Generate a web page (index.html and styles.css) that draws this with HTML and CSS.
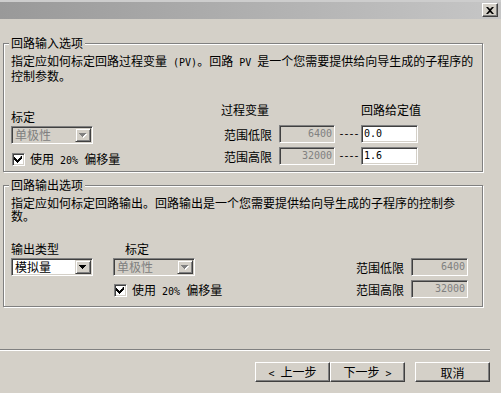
FILE: index.html
```html
<!DOCTYPE html>
<html lang="zh-CN">
<head>
<meta charset="utf-8">
<title>回路选项</title>
<link rel="stylesheet" href="styles.css">
</head>
<body>
<div class="titlebar">
  <span class="close">
    <svg width="8" height="7" viewBox="0 0 8 7"><path d="M0 0h2l2 2 2-2h2v0l-3 3.5 3 3.5h-2l-2-2-2 2h-2l3-3.5z"/></svg>
  </span>
</div>
<main class="main">
  <section class="group g1">
    <span class="legend">回路输入选项</span>
    <p class="desc">指定应如何标定回路过程变量<span class="en"> (PV)</span>。回路<span class="en"> PV </span>是一个您需要提供给向导生成的子程序的<br>控制参数。</p>
    <div class="g1-row">
      <div class="left-col">
        <div class="label lbl-top">标定</div>
        <div class="combo disabled">
          <span class="combo-text">单极性</span>
          <span class="combo-btn"><svg width="8" height="5" viewBox="0 0 8 5"><path class="shadow" d="M1 1h7v1h-1v1h-1v1h-1v1h-1v-1h-1v-1h-1v-1h-1z"/><path d="M0 0h7v1h-1v1h-1v1h-1v1h-1v-1h-1v-1h-1v-1h-1z"/></svg></span>
        </div>
        <div class="check check-g1">
          <span class="box"><svg width="9" height="9" viewBox="0 0 9 9"><path d="M7 1h1v3h-1v1h-1v1h-1v1h-1v1h-1v-1h-1v-1h-1v-1h-1v-3h1v1h1v1h1v1h1v-1h1v-1h1z"/></svg></span>
          <span>使用<span class="en"> 20% </span>偏移量</span>
        </div>
      </div>
      <div class="range-grid">
        <div class="hdr">过程变量</div>
        <div></div>
        <div></div>
        <div class="hdr">回路给定值</div>
        <div class="rlabel">范围低限</div>
        <div class="field disabled num">6400</div>
        <div class="dash">----</div>
        <div class="field num">0.0</div>
        <div class="rlabel">范围高限</div>
        <div class="field disabled num">32000</div>
        <div class="dash">----</div>
        <div class="field num">1.6</div>
      </div>
    </div>
  </section>

  <section class="group g2">
    <span class="legend">回路输出选项</span>
    <p class="desc">指定应如何标定回路输出。回路输出是一个您需要提供给向导生成的子程序的控制参<br>数。</p>
    <div class="g2-row">
      <div class="col-type">
        <div class="label">输出类型</div>
        <div class="combo">
          <span class="combo-text">模拟量</span>
          <span class="combo-btn"><svg width="8" height="5" viewBox="0 0 8 5"><path d="M0 0h7v1h-1v1h-1v1h-1v1h-1v-1h-1v-1h-1v-1h-1z"/></svg></span>
        </div>
      </div>
      <div class="col-scale">
        <div class="label indent">标定</div>
        <div class="combo disabled">
          <span class="combo-text">单极性</span>
          <span class="combo-btn"><svg width="8" height="5" viewBox="0 0 8 5"><path class="shadow" d="M1 1h7v1h-1v1h-1v1h-1v1h-1v-1h-1v-1h-1v-1h-1z"/><path d="M0 0h7v1h-1v1h-1v1h-1v1h-1v-1h-1v-1h-1v-1h-1z"/></svg></span>
        </div>
        <div class="check check-g2">
          <span class="box"><svg width="9" height="9" viewBox="0 0 9 9"><path d="M7 1h1v3h-1v1h-1v1h-1v1h-1v1h-1v-1h-1v-1h-1v-1h-1v-3h1v1h1v1h1v1h1v-1h1v-1h1z"/></svg></span>
          <span>使用<span class="en"> 20% </span>偏移量</span>
        </div>
      </div>
      <div class="out-grid">
        <div class="rlabel">范围低限</div>
        <div class="field disabled num">6400</div>
        <div class="rlabel">范围高限</div>
        <div class="field disabled num">32000</div>
      </div>
    </div>
  </section>
</main>
<div class="separator"></div>
<footer class="footer">
  <button class="btn"><span class="en">&lt; </span>上一步</button>
  <button class="btn">下一步<span class="en"> &gt;</span></button>
  <button class="btn btn-cancel">取消</button>
</footer>
</body>
</html>
```
FILE: styles.css
```css
* { box-sizing: border-box; }
html, body { margin: 0; padding: 0; }
body {
  width: 501px;
  height: 393px;
  overflow: hidden;
  background: #d4d0c8;
  color: #000;
  font-family: "Noto Sans CJK SC", sans-serif;
  font-size: 12px;
  line-height: 13px;
}
.en {
  font-family: "DejaVu Sans Mono", monospace;
  font-size: 10px;
  white-space: pre;
}

/* title bar */
.titlebar {
  height: 19px;
  border-top: 2px solid #cdcdcd;
  background: linear-gradient(to right, #999999, #c6c6c6);
  display: flex;
  justify-content: flex-end;
  align-items: flex-start;
  padding: 1px 3px 0 0;
}
.close {
  width: 16px;
  height: 14px;
  background: #d4d0c8;
  border: 1px solid;
  border-color: #fff #404040 #404040 #fff;
  box-shadow: inset -1px -1px #808080;
  display: flex;
  align-items: center;
  justify-content: center;
}
.close svg { fill: #000; }

/* groups */
.main { padding: 24px 0 0 3px; }
.group {
  position: relative;
  width: 480px;
  border: 1px solid #808080;
  box-shadow: inset 1px 1px #fff, 1px 1px #fff;
  padding: 10px 0 0 7px;
}
.g1 { height: 129px; }
.g2 { height: 122px; margin-top: 13px; }
.legend {
  position: absolute;
  top: -8px;
  left: 5px;
  padding: 0 2px;
  background: #d4d0c8;
}
.desc { margin: 0; white-space: nowrap; }
.label, .hdr, .rlabel, .check { white-space: nowrap; }

/* group 1 */
.g1-row { display: flex; margin-top: 21px; }
.left-col {
  width: 210px;
  display: flex;
  flex-direction: column;
  align-items: flex-start;
}
.lbl-top { margin-top: 7px; }

.combo {
  margin-top: 3px;
  width: 82px;
  height: 18px;
  display: flex;
  border: 1px solid;
  border-color: #808080 #fff #fff #808080;
  box-shadow: inset 1px 1px #404040, inset -1px -1px #d4d0c8;
  padding: 1px;
  background: #fff;
}
.combo.disabled { background: #d4d0c8; color: #808080; }
.combo-text { flex: 1; padding-left: 2px; line-height: 14px; }
.combo-btn {
  width: 16px;
  height: 14px;
  background: #d4d0c8;
  border: 1px solid;
  border-color: #d4d0c8 #404040 #404040 #d4d0c8;
  box-shadow: inset 1px 1px #fff, inset -1px -1px #808080;
  display: flex;
  align-items: center;
  justify-content: center;
}
.combo-btn svg { fill: #000; }
.combo.disabled .combo-btn svg path { fill: #808080; }
.combo.disabled .combo-btn svg path.shadow { fill: #fff; }

.check { display: flex; align-items: center; gap: 5px; }
.check-g1 { margin-top: 8px; }
.check-g2 { margin-top: 7px; }
.box {
  flex: none;
  margin-left: 1px;
  width: 13px;
  height: 13px;
  border: 1px solid;
  border-color: #808080 #fff #fff #808080;
  box-shadow: inset 1px 1px #404040, inset -1px -1px #d4d0c8;
  padding: 1px;
  background: #fff;
  display: flex;
}
.box svg { fill: #000; }

.range-grid {
  display: grid;
  grid-template-columns: 58px 56px 26px 57px;
  grid-template-rows: 18px 18px 18px;
  row-gap: 4px;
}
.hdr { align-self: start; }
.rlabel { align-self: center; }
.range-grid .rlabel { padding-left: 3px; }
.field {
  height: 18px;
  border: 1px solid;
  border-color: #808080 #fff #fff #808080;
  box-shadow: inset 1px 1px #404040, inset -1px -1px #d4d0c8;
  padding: 1px 2px 1px 2px;
  background: #fff;
  line-height: 14px;
}
.field.disabled { background: #d4d0c8; color: #808080; text-align: right; }
.num { font-family: "DejaVu Sans Mono", monospace; font-size: 10px; }
.dash {
  align-self: center;
  justify-self: center;
  font-family: "Liberation Mono", monospace;
  font-size: 10px;
  letter-spacing: -1px;
  padding-left: 1px;
}

/* group 2 */
.g2-row { display: flex; margin-top: 20px; }
.col-type { width: 102px; display: flex; flex-direction: column; align-items: flex-start; }
.col-scale { width: 82px; display: flex; flex-direction: column; align-items: flex-start; }
.indent { margin-left: 12px; }
.out-grid {
  margin-left: auto;
  margin-right: 14px;
  margin-top: 16px;
  display: grid;
  grid-template-columns: auto 57px;
  grid-template-rows: 18px 18px;
  column-gap: 7px;
  row-gap: 4px;
  align-self: flex-start;
}

/* footer */
.separator {
  margin-top: 42px;
  width: 490px;
  height: 2px;
  border-top: 1px solid #808080;
  border-bottom: 1px solid #fff;
}
.footer {
  width: 490px;
  margin-top: 11px;
  display: flex;
  justify-content: flex-end;
}
.btn {
  width: 75px;
  height: 20px;
  padding: 0;
  margin: 0;
  font-family: "Noto Sans CJK SC", sans-serif;
  font-size: 12px;
  line-height: 13px;
  color: #000;
  background: #d4d0c8;
  border: 1px solid;
  border-color: #fff #404040 #404040 #fff;
  box-shadow: inset -1px -1px #808080;
  border-radius: 0;
}
.btn-cancel { margin-left: 10px; }
```
